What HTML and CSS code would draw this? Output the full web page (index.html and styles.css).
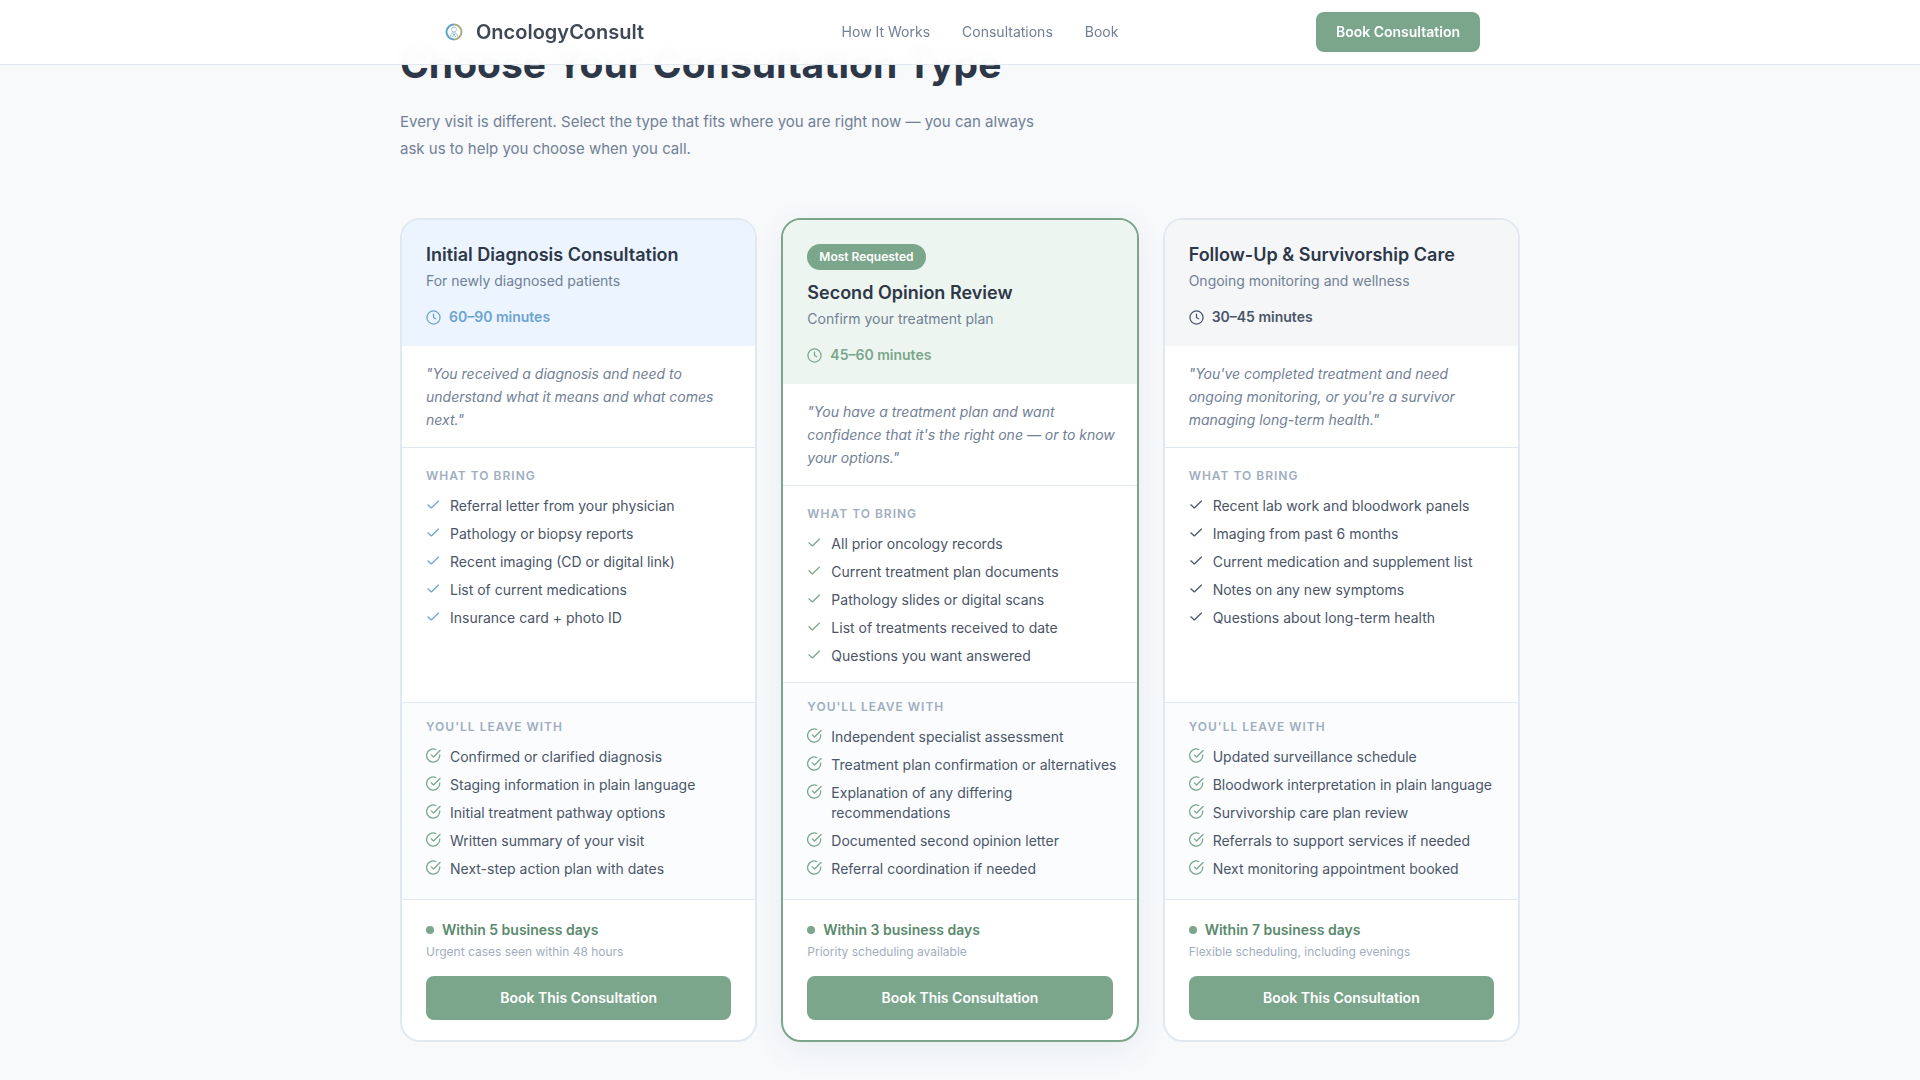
FILE: index.html
```html
<!DOCTYPE html>
<html lang="en">
<head>
<meta charset="utf-8">
<meta name="viewport" content="width=device-width, initial-scale=1">
<title>OncologyConsult</title>
<link rel="stylesheet" href="styles.css">
</head>
<body>
<svg class="sprite" aria-hidden="true">
  <symbol id="clock" viewBox="0 0 24 24"><circle cx="12" cy="12" r="10.5"/><path d="M12 6.5V12l3.5 2"/></symbol>
  <symbol id="check" viewBox="0 0 24 24"><path d="M3 12.5l5.500 5L20 6.500"/></symbol>
  <symbol id="done" viewBox="0 0 24 24"><path d="M22 11v1a10.500 10.500 0 1 1-6.300-9.600"/><path d="M22.500 4L12 14.500l-3.500-3.500"/></symbol>
</svg>

<header class="site-header">
  <div class="bar">
    <a class="brand" href="#">
      <svg class="logo" viewBox="0 0 28 28" aria-hidden="true">
        <path class="ring-blue" d="M14 6.500a7.500 7.500 0 1 0 0 15"/>
        <path class="ring-gold" d="M14 6.500a7.500 7.500 0 0 1 0 15"/>
        <circle class="core" cx="14" cy="11.500" r="2.500"/>
        <path class="core" d="M10.500 18.500c0-5 7-5 7 0M12 15l4 4M16 15l-4 4"/>
      </svg>
      <span>OncologyConsult</span>
    </a>
    <nav class="nav">
      <a href="#how">How It Works</a>
      <a href="#consultations">Consultations</a>
      <a href="#book">Book</a>
    </nav>
    <a class="button header-cta" href="#book">Book Consultation</a>
  </div>
</header>

<main class="page" id="consultations">
  <h1 class="heading">Choose Your Consultation Type</h1>
  <p class="intro">Every visit is different. Select the type that fits where you are right now — you can always ask us to help you choose when you call.</p>

  <div class="cards">
    <article class="card initial">
      <div class="card-head">
        <h2>Initial Diagnosis Consultation</h2>
        <p class="for">For newly diagnosed patients</p>
        <p class="duration"><svg class="icon"><use href="#clock"/></svg>60–90 minutes</p>
      </div>
      <p class="quote">"You received a diagnosis and need to understand what it means and what comes next."</p>
      <section class="bring">
        <h3>What to Bring</h3>
        <ul>
          <li><svg class="icon"><use href="#check"/></svg>Referral letter from your physician</li>
          <li><svg class="icon"><use href="#check"/></svg>Pathology or biopsy reports</li>
          <li><svg class="icon"><use href="#check"/></svg>Recent imaging (CD or digital link)</li>
          <li><svg class="icon"><use href="#check"/></svg>List of current medications</li>
          <li><svg class="icon"><use href="#check"/></svg>Insurance card + photo ID</li>
        </ul>
      </section>
      <section class="leave">
        <h3>You'll Leave With</h3>
        <ul>
          <li><svg class="icon"><use href="#done"/></svg>Confirmed or clarified diagnosis</li>
          <li><svg class="icon"><use href="#done"/></svg>Staging information in plain language</li>
          <li><svg class="icon"><use href="#done"/></svg>Initial treatment pathway options</li>
          <li><svg class="icon"><use href="#done"/></svg>Written summary of your visit</li>
          <li><svg class="icon"><use href="#done"/></svg>Next-step action plan with dates</li>
        </ul>
      </section>
      <footer class="card-foot">
        <p class="wait">Within 5 business days</p>
        <p class="note">Urgent cases seen within 48 hours</p>
        <button class="button" type="button">Book This Consultation</button>
      </footer>
    </article>

    <article class="card second">
      <div class="card-head">
        <span class="badge">Most Requested</span>
        <h2>Second Opinion Review</h2>
        <p class="for">Confirm your treatment plan</p>
        <p class="duration"><svg class="icon"><use href="#clock"/></svg>45–60 minutes</p>
      </div>
      <p class="quote">"You have a treatment plan and want confidence that it's the right one — or to know your options."</p>
      <section class="bring">
        <h3>What to Bring</h3>
        <ul>
          <li><svg class="icon"><use href="#check"/></svg>All prior oncology records</li>
          <li><svg class="icon"><use href="#check"/></svg>Current treatment plan documents</li>
          <li><svg class="icon"><use href="#check"/></svg>Pathology slides or digital scans</li>
          <li><svg class="icon"><use href="#check"/></svg>List of treatments received to date</li>
          <li><svg class="icon"><use href="#check"/></svg>Questions you want answered</li>
        </ul>
      </section>
      <section class="leave">
        <h3>You'll Leave With</h3>
        <ul>
          <li><svg class="icon"><use href="#done"/></svg>Independent specialist assessment</li>
          <li><svg class="icon"><use href="#done"/></svg>Treatment plan confirmation or alternatives</li>
          <li><svg class="icon"><use href="#done"/></svg>Explanation of any differing recommendations</li>
          <li><svg class="icon"><use href="#done"/></svg>Documented second opinion letter</li>
          <li><svg class="icon"><use href="#done"/></svg>Referral coordination if needed</li>
        </ul>
      </section>
      <footer class="card-foot">
        <p class="wait">Within 3 business days</p>
        <p class="note">Priority scheduling available</p>
        <button class="button" type="button">Book This Consultation</button>
      </footer>
    </article>

    <article class="card follow">
      <div class="card-head">
        <h2>Follow-Up &amp; Survivorship Care</h2>
        <p class="for">Ongoing monitoring and wellness</p>
        <p class="duration"><svg class="icon"><use href="#clock"/></svg>30–45 minutes</p>
      </div>
      <p class="quote">"You've completed treatment and need ongoing monitoring, or you're a survivor managing long-term health."</p>
      <section class="bring">
        <h3>What to Bring</h3>
        <ul>
          <li><svg class="icon"><use href="#check"/></svg>Recent lab work and bloodwork panels</li>
          <li><svg class="icon"><use href="#check"/></svg>Imaging from past 6 months</li>
          <li><svg class="icon"><use href="#check"/></svg>Current medication and supplement list</li>
          <li><svg class="icon"><use href="#check"/></svg>Notes on any new symptoms</li>
          <li><svg class="icon"><use href="#check"/></svg>Questions about long-term health</li>
        </ul>
      </section>
      <section class="leave">
        <h3>You'll Leave With</h3>
        <ul>
          <li><svg class="icon"><use href="#done"/></svg>Updated surveillance schedule</li>
          <li><svg class="icon"><use href="#done"/></svg>Bloodwork interpretation in plain language</li>
          <li><svg class="icon"><use href="#done"/></svg>Survivorship care plan review</li>
          <li><svg class="icon"><use href="#done"/></svg>Referrals to support services if needed</li>
          <li><svg class="icon"><use href="#done"/></svg>Next monitoring appointment booked</li>
        </ul>
      </section>
      <footer class="card-foot">
        <p class="wait">Within 7 business days</p>
        <p class="note">Flexible scheduling, including evenings</p>
        <button class="button" type="button">Book This Consultation</button>
      </footer>
    </article>
  </div>
</main>
</body>
</html>
```

FILE: styles.css
```css
* { box-sizing: border-box; margin: 0; padding: 0; }

body {
  background: #f7f9fb;
  color: #4a5568;
  font-family: Inter, "Liberation Sans", sans-serif;
  font-size: 14px;
  line-height: 20px;
}

a { color: inherit; text-decoration: none; }
ul { list-style: none; }
.sprite { display: none; }

.site-header {
  position: sticky;
  top: 0;
  z-index: 10;
  background: rgba(255, 255, 255, 0.96);
  backdrop-filter: blur(8px);
  border-bottom: 1px solid #e2e8f0;
}

.bar {
  display: flex;
  align-items: center;
  justify-content: space-between;
  max-width: 1120px;
  height: 64px;
  margin: 0 auto;
  padding: 0 40px;
}

.brand {
  display: flex;
  align-items: center;
  gap: 8px;
  color: #3f4956;
  font-size: 20px;
  font-weight: 600;
}

.logo { width: 28px; height: 28px; fill: none; stroke-width: 2; }
.ring-blue { stroke: #63a5c8; }
.ring-gold { stroke: #a9ae84; }
.core { stroke: #9fc2d6; stroke-width: 1; }

.nav { display: flex; gap: 32px; color: #718096; }

.button {
  display: block;
  width: 100%;
  padding: 12px 20px;
  border: 0;
  border-radius: 8px;
  background: #7ba68c;
  color: #fff;
  font: 600 14px/20px Inter, "Liberation Sans", sans-serif;
  text-align: center;
}
.header-cta { width: auto; padding: 10px 20px; }

.page { max-width: 1168px; margin: 0 auto; padding: 0 24px 38px; }

.heading {
  margin-top: -32px;
  padding-top: 3px;
  color: #2d3748;
  font-size: 39px;
  font-weight: 700;
  line-height: 56px;
}

.intro {
  max-width: 660px;
  margin: 16px 0 56px;
  color: #718096;
  font-size: 15px;
  line-height: 27px;
}

.cards {
  display: grid;
  grid-template-columns: repeat(3, 1fr);
  gap: 24px;
}

.card {
  --accent: #4a5568;
  display: flex;
  flex-direction: column;
  overflow: hidden;
  border: 2px solid #e2e8f0;
  border-radius: 20px;
  background: #fff;
}
.initial { --accent: #6ba3cf; --tint: #ebf4ff; }
.second { --accent: #7ba68c; --tint: #edf5f0; border-color: #7ba68c; box-shadow: 0 8px 32px rgba(74, 85, 104, 0.08); }
.follow { --tint: #f4f6f8; }

.card-head { padding: 24px 24px 20px; background: var(--tint); }
.card-head h2 { color: #2d3748; font-size: 18px; font-weight: 600; line-height: 22px; }
.for { margin-top: 4px; color: #718096; line-height: 22px; }
.duration {
  display: flex;
  align-items: center;
  gap: 8px;
  margin-top: 16px;
  color: var(--accent);
  font-weight: 600;
  line-height: 18px;
}

.badge {
  display: inline-block;
  margin-bottom: 12px;
  padding: 4px 12px;
  border-radius: 13px;
  background: #7ba68c;
  color: #fff;
  font-size: 12px;
  font-weight: 600;
  line-height: 18px;
  vertical-align: top;
}

.quote {
  padding: 16px 20px 16px 24px;
  border-bottom: 1px solid #e2e8f0;
  color: #718096;
  font-style: italic;
  line-height: 23px;
}

.icon {
  flex: none;
  width: 15px;
  height: 15px;
  fill: none;
  stroke: var(--accent);
  stroke-width: 2;
  stroke-linecap: round;
  stroke-linejoin: round;
}

.card h3 {
  margin-bottom: 12px;
  color: #a0aec0;
  font-size: 12px;
  font-weight: 600;
  letter-spacing: 1px;
  line-height: 16px;
  text-transform: uppercase;
}
.card ul { display: grid; gap: 8px; }
.card li { display: flex; gap: 9px; }
.card li .icon { margin-top: 1px; }

.bring { flex: 1; padding: 20px 24px 16px; }
.leave {
  padding: 16px 16px 20px 24px;
  border: 1px solid #e2e8f0;
  border-width: 1px 0;
  background: #fafcfe;
}
.leave .icon { stroke: #7ba68c; }

.card-foot { padding: 20px 24px; }
.wait {
  display: flex;
  align-items: center;
  gap: 8px;
  color: #5a8a6c;
  font-weight: 600;
}
.wait::before {
  width: 8px;
  height: 8px;
  border-radius: 50%;
  background: #7ba68c;
  content: "";
}
.note { margin: 2px 0 14px; color: #a0aec0; font-size: 12px; }
```
